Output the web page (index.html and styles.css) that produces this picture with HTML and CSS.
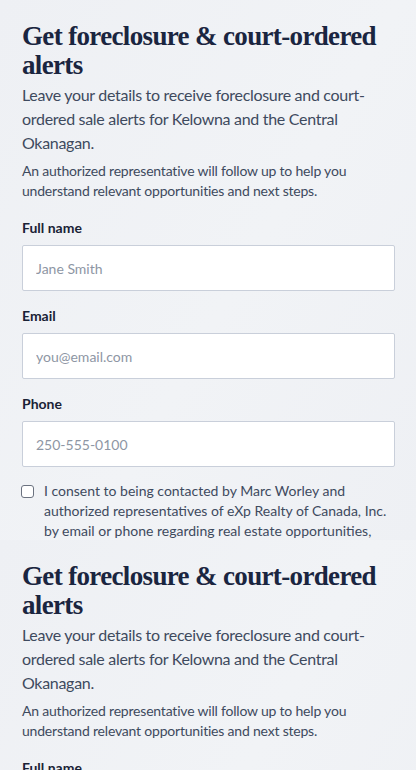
FILE: index.html
```html
<!DOCTYPE html>
<html lang="en">
<head>
<meta charset="utf-8">
<meta name="viewport" content="width=device-width, initial-scale=1">
<title>Foreclosure alerts</title>
<link rel="stylesheet" href="styles.css">
</head>
<body>
<section class="panel panel-clipped">
  <h1 class="title">Get foreclosure &amp; court-ordered alerts</h1>
  <p class="lead">Leave your details to receive foreclosure and court-ordered sale alerts for Kelowna and the Central Okanagan.</p>
  <p class="note">An authorized representative will follow up to help you understand relevant opportunities and next steps.</p>
  <form class="form">
    <label class="field">
      <span class="label">Full name</span>
      <input class="input" type="text" placeholder="Jane Smith">
    </label>
    <label class="field">
      <span class="label">Email</span>
      <input class="input" type="email" placeholder="you@email.com">
    </label>
    <label class="field">
      <span class="label">Phone</span>
      <input class="input" type="tel" placeholder="250-555-0100">
    </label>
    <label class="consent">
      <input class="check" type="checkbox">
      <span>I consent to being contacted by Marc Worley and authorized representatives of eXp Realty of Canada, Inc. by email or phone regarding real estate opportunities, including foreclosure and court-ordered sale alerts. I may withdraw consent at any time.</span>
    </label>
  </form>
</section>
<section class="panel">
  <h1 class="title">Get foreclosure &amp; court-ordered alerts</h1>
  <p class="lead">Leave your details to receive foreclosure and court-ordered sale alerts for Kelowna and the Central Okanagan.</p>
  <p class="note">An authorized representative will follow up to help you understand relevant opportunities and next steps.</p>
  <form class="form">
    <label class="field">
      <span class="label">Full name</span>
      <input class="input" type="text" placeholder="Jane Smith">
    </label>
    <label class="field">
      <span class="label">Email</span>
      <input class="input" type="email" placeholder="you@email.com">
    </label>
    <label class="field">
      <span class="label">Phone</span>
      <input class="input" type="tel" placeholder="250-555-0100">
    </label>
  </form>
</section>
</body>
</html>
```
FILE: styles.css
```css
* { box-sizing: border-box; }

html, body {
  margin: 0;
  padding: 0;
  background: #eef0f4;
}

body {
  font-family: Lato, "Noto Sans", sans-serif;
  color: #3e4a5e;
}

.panel {
  padding: 22px 21px 0 22px;
  background: linear-gradient(120deg, #eef0f4 0%, #f1f3f6 55%, #eef0f4 100%);
}

.panel-clipped {
  height: 540px;
  overflow: hidden;
}

.title {
  margin: 0;
  font-family: "Liberation Serif", "DejaVu Serif", serif;
  font-weight: 700;
  font-size: 27px;
  line-height: 29px;
  letter-spacing: -0.65px;
  color: #1a2540;
}

.lead {
  margin: 3px 0 0;
  font-size: 16px;
  line-height: 24px;
  letter-spacing: -0.3px;
  color: #3e4a5e;
}

.note {
  margin: 6px 0 0;
  font-size: 14px;
  line-height: 20px;
  letter-spacing: -0.2px;
  color: #3e4a5e;
}

.form {
  display: flex;
  flex-direction: column;
  gap: 16px;
  margin-top: 18px;
}

.field {
  display: flex;
  flex-direction: column;
  gap: 8px;
}

.label {
  font-size: 14px;
  line-height: 18px;
  font-weight: 700;
  color: #1a2236;
}

.input {
  width: 100%;
  height: 46px;
  margin: 0;
  padding: 0 13px;
  border: 1px solid #c9cfda;
  border-radius: 2px;
  background: #fff;
  font: inherit;
  font-size: 14px;
  color: #1a2236;
}

.input::placeholder {
  color: #8e96a4;
}

.consent {
  display: flex;
  gap: 10px;
  align-items: flex-start;
  margin-top: -2px;
  font-size: 14px;
  line-height: 20px;
  color: #3e4a5e;
}

.check {
  appearance: none;
  flex: none;
  width: 13px;
  height: 13px;
  margin: 4px 0 0 -1px;
  border: 1.5px solid #6b7280;
  border-radius: 3px;
  background: #fff;
}
```
